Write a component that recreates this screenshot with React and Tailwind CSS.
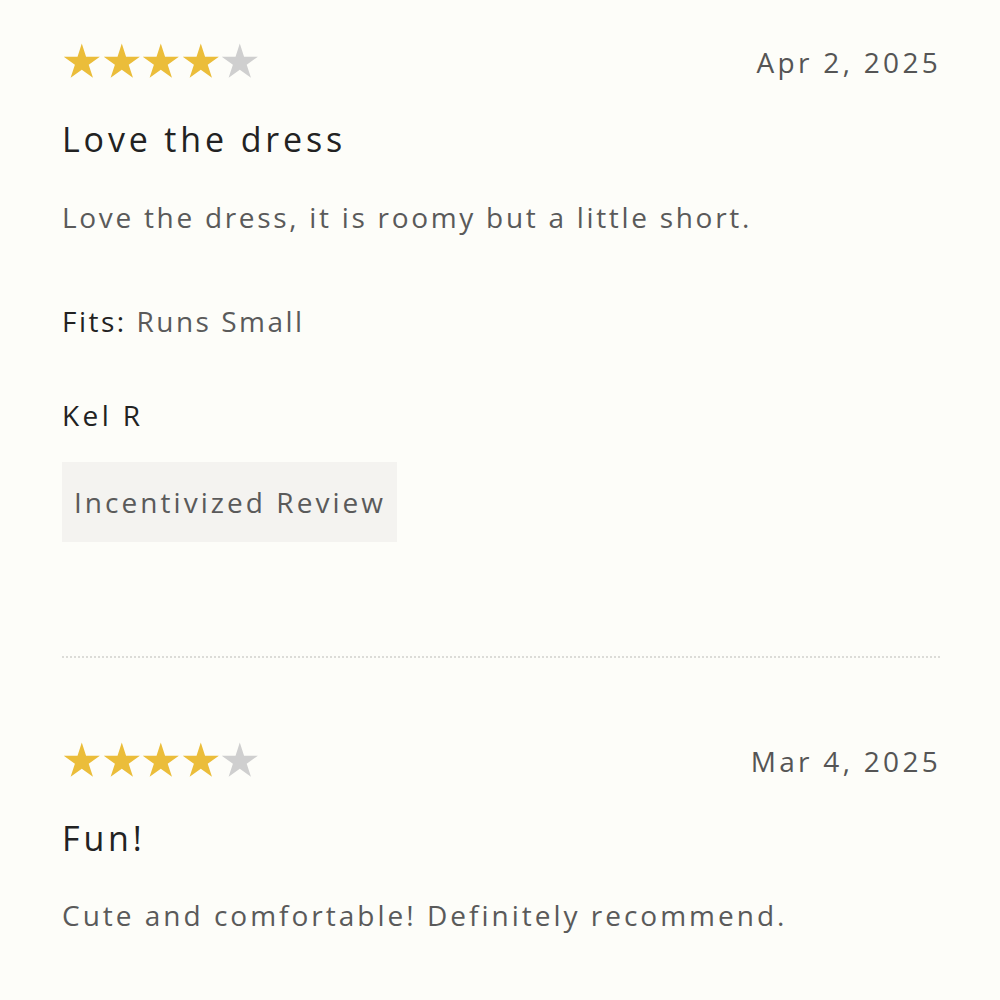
import React from 'react';

const Star = ({ filled }) => (
  <svg viewBox="0 0 39.6 38" className="w-[39.6px] h-[38px]">
    <polygon
      points="19.8,0.5 24.07,13.63 37.87,13.63 26.7,21.74 30.97,34.87 19.8,26.76 8.63,34.87 12.9,21.74 1.73,13.63 15.53,13.63"
      fill={filled ? '#ebbd3a' : '#cfcfcf'}
    />
  </svg>
);

function Stars({ count }) {
  return (
    <div className="flex h-[38px] items-center">
      {[1, 2, 3, 4, 5].map((i) => (
        <Star key={i} filled={i <= count} />
      ))}
    </div>
  );
}

function Review({ date, title, body, bodyTracking, fits, author, badge, first }) {
  return (
    <div>
      <div className="flex items-center justify-between">
        <Stars count={4} />
        <div className="mr-[-3px] text-[28px] leading-[38px] text-[#555555] tracking-[3.3px]">{date}</div>
      </div>
      <h3 className="mt-[38px] text-[34px] leading-[40px] text-[#222222] tracking-[3.85px]">{title}</h3>
      <p className={`${first ? 'mt-[40px]' : 'mt-[39px]'} ${bodyTracking} text-[28px] leading-[36px] text-[#5a5a5a]`}>{body}</p>
      {fits && (
        <p className="mt-[68px] text-[28px] leading-[36px] tracking-[2.5px]">
          <span className="text-[#222222]">Fits:</span>
          <span className="text-[#5a5a5a]"> Runs Small</span>
        </p>
      )}
      {author && (
        <p className="mt-[58px] text-[28px] leading-[36px] text-[#222222] tracking-[3.4px]">{author}</p>
      )}
      {badge && (
        <div className="mt-[29px] inline-flex h-[80px] items-center bg-[#f4f3f0] pl-[12px] pr-[11px] text-[28px] text-[#5a5a5a] tracking-[3.05px]">
          {badge}
        </div>
      )}
    </div>
  );
}

export default function App() {
  return (
    <div className="min-h-[1000px] bg-[#fdfdf9] px-[62px] pt-[43px] font-['Open_Sans',sans-serif] overflow-hidden">
      <Review
        first
        date="Apr 2, 2025"
        title="Love the dress"
        body="Love the dress, it is roomy but a little short."
        bodyTracking="tracking-[2.7px]"
        fits
        author="Kel R"
        badge="Incentivized Review"
      />
      <div className="mt-[114px] mr-[-2px] border-t-2 border-dotted border-[#dcdcd8]" />
      <div className="mt-[84px]">
        <Review
          date="Mar 4, 2025"
          title="Fun!"
          body="Cute and comfortable! Definitely recommend."
          bodyTracking="tracking-[3px]"
        />
      </div>
    </div>
  );
}
